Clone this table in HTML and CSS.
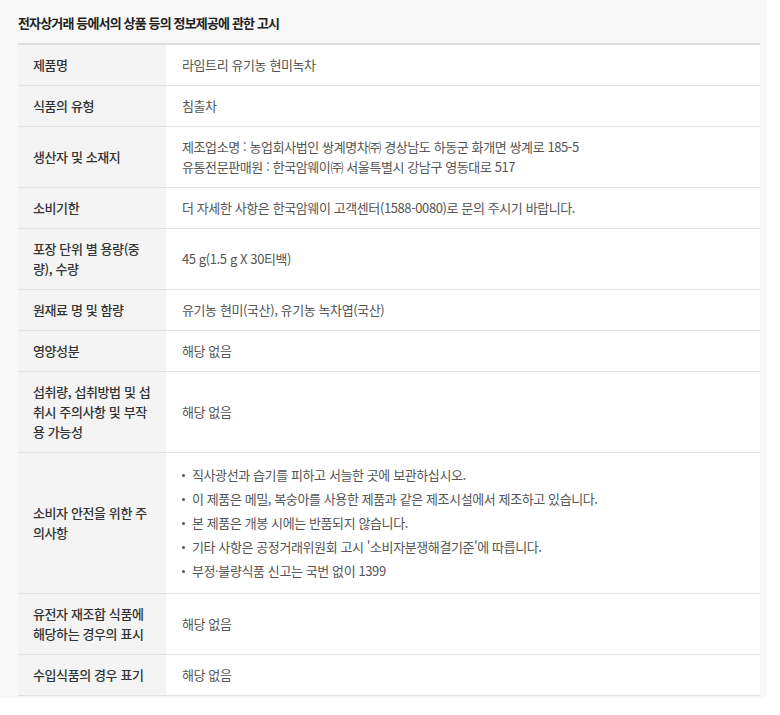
FILE: index.html
```
<!DOCTYPE html>
<html lang="ko">
<head>
    <meta charset="UTF-8">
    <meta name="viewport" content="width=device-width, initial-scale=1.0">
    <title>상품정보제공 고시</title>
    <link rel="stylesheet" href="styles.css">
</head>
<body>
    <div class="notice">
        <h3 class="notice-title">전자상거래 등에서의 상품 등의 정보제공에 관한 고시</h3>

        <table class="info-table">
            <tr>
                <th>제품명</th>
                <td>라임트리 유기농 현미녹차</td>
            </tr>
            <tr>
                <th>식품의 유형</th>
                <td>침출차</td>
            </tr>
            <tr>
                <th>생산자 및 소재지</th>
                <td>제조업소명 : 농업회사법인 쌍계명차㈜ 경상남도 하동군 화개면 쌍계로 185-5<br>유통전문판매원 : 한국암웨이㈜ 서울특별시 강남구 영동대로 517</td>
            </tr>
            <tr>
                <th>소비기한</th>
                <td>더 자세한 사항은 한국암웨이 고객센터(1588-0080)로 문의 주시기 바랍니다.</td>
            </tr>
            <tr>
                <th>포장 단위 별 용량(중량), 수량</th>
                <td>45 g(1.5 g X 30티백)</td>
            </tr>
            <tr>
                <th>원재료 명 및 함량</th>
                <td>유기농 현미(국산), 유기농 녹차엽(국산)</td>
            </tr>
            <tr>
                <th>영양성분</th>
                <td>해당 없음</td>
            </tr>
            <tr>
                <th>섭취량, 섭취방법 및 섭취시 주의사항 및 부작용 가능성</th>
                <td>해당 없음</td>
            </tr>
            <tr>
                <th>소비자 안전을 위한 주의사항</th>
                <td>
                    <ul class="dot-list">
                        <li>직사광선과 습기를 피하고 서늘한 곳에 보관하십시오.</li>
                        <li>이 제품은 메밀, 복숭아를 사용한 제품과 같은 제조시설에서 제조하고 있습니다.</li>
                        <li>본 제품은 개봉 시에는 반품되지 않습니다.</li>
                        <li>기타 사항은 공정거래위원회 고시 '소비자분쟁해결기준'에 따릅니다.</li>
                        <li>부정·불량식품 신고는 국번 없이 1399</li>
                    </ul>
                </td>
            </tr>
            <tr>
                <th>유전자 재조합 식품에 해당하는 경우의 표시</th>
                <td>해당 없음</td>
            </tr>
            <tr>
                <th>수입식품의 경우 표기</th>
                <td>해당 없음</td>
            </tr>
        </table>
    </div>
</body>
</html>
```

FILE: styles.css
```
body {
    margin: 0;
    background-color: #fff;
    font-family: "Noto Sans CJK KR", "Noto Sans", sans-serif;
    color: #444;
}

.notice {
    width: 766px;
    background-color: #f8f8f8;
    padding: 0 6px 2px 18px;
    box-sizing: border-box;
}

.notice-title {
    margin: 0;
    height: 43px;
    line-height: 46px;
    font-size: 13px;
    font-weight: bold;
    color: #222;
    letter-spacing: -0.85px;
}

.info-table {
    width: 100%;
    border-collapse: collapse;
    border-top: 2px solid #dedede;
    font-size: 13px;
    letter-spacing: -0.4px;
}

.info-table th,
.info-table td {
    border-bottom: 1px solid #e2e2e2;
    line-height: 20px;
    padding: 10px 15px;
    vertical-align: middle;
    text-align: left;
}

.info-table th {
    width: 118px;
    background-color: #f4f4f4;
    font-weight: 500;
    color: #333;
    word-break: break-all;
}

.info-table td {
    background-color: #fff;
    padding-left: 16px;
    color: #555;
}

.dot-list {
    list-style: none;
    margin: 0;
    padding: 0;
}

.dot-list li {
    line-height: 24px;
    padding-left: 10px;
    position: relative;
}

.dot-list li::before {
    content: "";
    position: absolute;
    left: 0;
    top: 11px;
    width: 3px;
    height: 3px;
    border-radius: 50%;
    background-color: #555;
}
```
